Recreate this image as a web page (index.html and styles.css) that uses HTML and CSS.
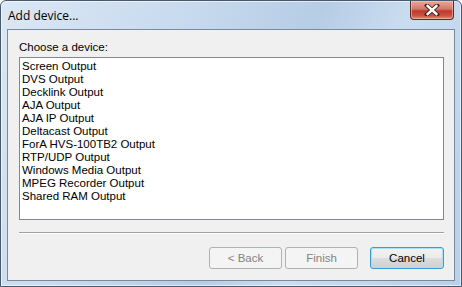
FILE: index.html
```html
<!DOCTYPE html>
<html lang="en">
<head>
    <meta charset="UTF-8">
    <title>Add device...</title>
    <link rel="stylesheet" href="styles.css">
</head>
<body>

<div class="window">
    <div class="titlebar">
        <span class="title">Add device...</span>
        <button class="close" title="Close">
            <svg width="16" height="12" viewBox="0 0 16 12">
                <path d="M3 1.5 L13 10.5 M13 1.5 L3 10.5" stroke="#3b2424" stroke-width="4.2" stroke-linecap="square"/>
                <path d="M3.6 2 L12.4 10 M12.4 2 L3.6 10" stroke="#ffffff" stroke-width="2.4" stroke-linecap="square"/>
            </svg>
        </button>
    </div>

    <div class="client">
        <div class="label">Choose a device:</div>
        <ul class="device-list">
            <li>Screen Output</li>
            <li>DVS Output</li>
            <li>Decklink Output</li>
            <li>AJA Output</li>
            <li>AJA IP Output</li>
            <li>Deltacast Output</li>
            <li>ForA HVS-100TB2 Output</li>
            <li>RTP/UDP Output</li>
            <li>Windows Media Output</li>
            <li>MPEG Recorder Output</li>
            <li>Shared RAM Output</li>
        </ul>

        <div class="separator"></div>

        <div class="buttons">
            <button class="btn" disabled>&lt; Back</button>
            <button class="btn" disabled>Finish</button>
            <button class="btn default">Cancel</button>
        </div>
    </div>
</div>

</body>
</html>
```

FILE: styles.css
```css
body {
    margin: 0;
    padding: 0;
    background-color: #ffffff;
    font-family: Tahoma, "DejaVu Sans", sans-serif;
}

.window {
    width: 462px;
    height: 287px;
    box-sizing: border-box;
    border: 1px solid #46596f;
    border-radius: 6px 6px 0 0;
    padding: 0 6px 5px 6px;
    background: linear-gradient(115deg, #dbe7f4 0%, #c9dbef 30%, #b6cde6 55%, #cadcf0 70%, #b9d0e9 100%);
    box-shadow: inset 0 0 0 1px rgba(255, 255, 255, 0.6);
}

.titlebar {
    height: 28px;
    display: flex;
    align-items: flex-start;
    justify-content: space-between;
}

.title {
    font-family: "Open Sans", "DejaVu Sans", sans-serif;
    font-size: 12px;
    color: #000000;
    padding-left: 1px;
    margin-top: 6px;
}

.close {
    width: 44px;
    height: 19px;
    margin-right: 1px;
    padding: 0;
    border: 1px solid #5a2a24;
    border-top: none;
    border-radius: 0 0 4px 4px;
    background: linear-gradient(#e9a99c 0%, #d4776a 45%, #c0392b 55%, #c9503f 80%, #e08a6f 100%);
    display: flex;
    align-items: center;
    justify-content: center;
    box-shadow: inset 0 0 0 1px rgba(255, 210, 200, 0.5);
}

.client {
    height: 252px;
    box-sizing: border-box;
    border: 1px solid #7a8a9c;
    background-color: #f0f0f0;
    padding: 11px 10px 0 11px;
    font-family: "Liberation Sans", Arial, sans-serif;
    font-size: 11.5px;
    color: #000000;
}

.label {
    height: 13px;
    line-height: 13px;
}

.device-list {
    list-style: none;
    margin: 3px 0 0 0;
    padding: 2px 2px 0 2px;
    height: 163px;
    box-sizing: border-box;
    border: 1px solid #828790;
    background-color: #ffffff;
}

.device-list li {
    height: 13px;
    line-height: 13px;
}

.separator {
    margin-top: 12px;
    height: 1px;
    background-color: #a0a0a0;
    border-bottom: 1px solid #ffffff;
}

.buttons {
    display: flex;
    justify-content: flex-end;
    margin-top: 13px;
}

.btn {
    width: 73px;
    height: 22px;
    margin-left: 3px;
    padding: 0;
    border: 1px solid #adb2b5;
    border-radius: 3px;
    background-color: #f4f4f4;
    color: #838383;
    font-family: "Liberation Sans", Arial, sans-serif;
    font-size: 11.5px;
}

.btn.default {
    width: 74px;
    margin-left: 12px;
    border-color: #3c9bd7;
    color: #000000;
    background: linear-gradient(#f2f2f2 0%, #ebebeb 48%, #dddddd 52%, #cfcfcf 100%);
    box-shadow: inset 0 0 0 1px #a8e0f8;
}
```
